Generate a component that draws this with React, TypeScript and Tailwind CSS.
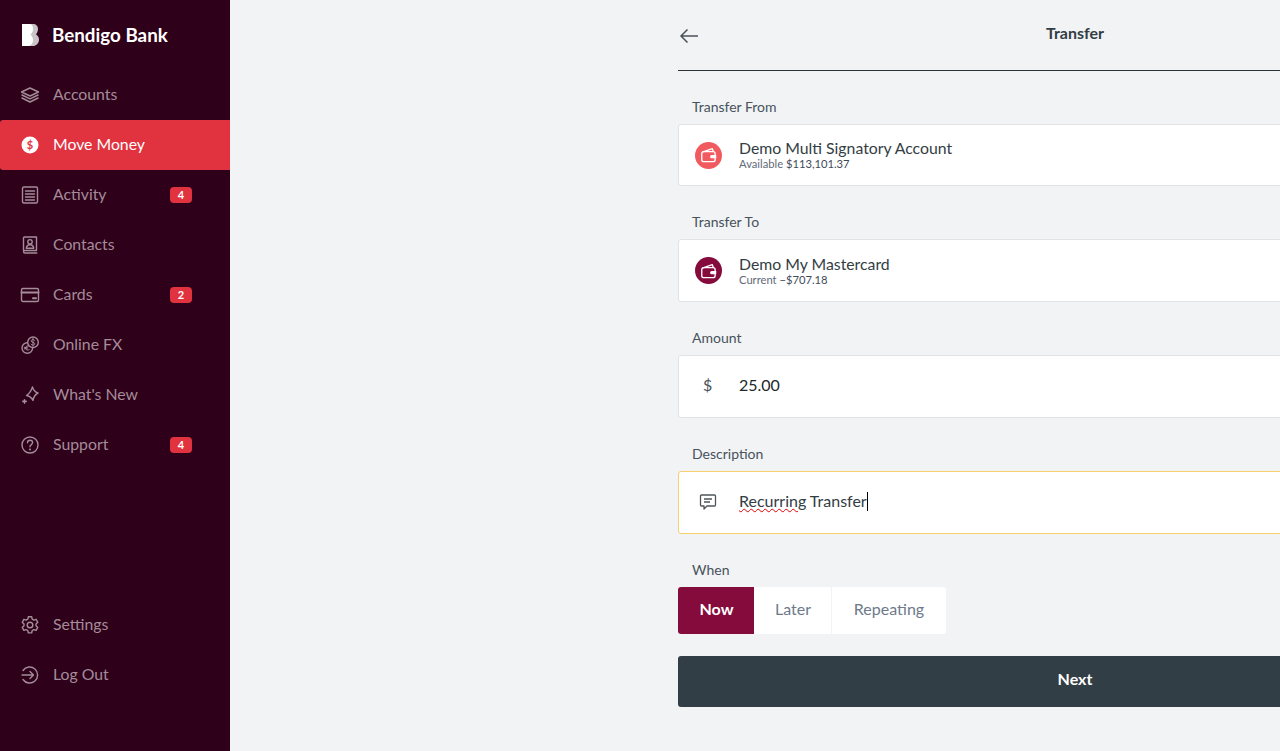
import type { ReactNode } from "react";

const stroke = {
  fill: "none",
  stroke: "currentColor",
  strokeWidth: 1.4,
  strokeLinecap: "round" as const,
  strokeLinejoin: "round" as const,
};

function Icon({ children }: { children: ReactNode }) {
  return (
    <svg width="20" height="20" viewBox="0 0 20 20" {...stroke}>
      {children}
    </svg>
  );
}

const icons: Record<string, ReactNode> = {
  accounts: (
    <Icon>
      <path d="M10 3 18.500 7 10 11 1.500 7Z" />
      <path d="M2 10 10 13.800 18 10" />
      <path d="M2 13 10 17 18 13" />
    </Icon>
  ),
  activity: (
    <Icon>
      <rect x="2.500" y="2" width="15" height="16" rx="1.500" />
      <path d="M5.500 6h9M5.500 9h9M5.500 12h9M5.500 15h9" />
    </Icon>
  ),
  contacts: (
    <Icon>
      <path d="M3.500 15.500V3a1 1 0 0 1 1-1h12v13.500H4.800a1.300 1.300 0 0 0-1.300 1.300v0a1.300 1.300 0 0 0 1.300 1.200h12" />
      <circle cx="10" cy="6.800" r="2.200" />
      <path d="M6.300 13.200c.3-2.200 1.800-3.400 3.700-3.400s3.400 1.200 3.700 3.400Z" />
    </Icon>
  ),
  cards: (
    <Icon>
      <rect x="1.500" y="3.500" width="17" height="13" rx="1.500" />
      <path d="M1.500 7.500h17" strokeWidth="2" />
      <path d="M13 13.300h3" strokeWidth="2" />
    </Icon>
  ),
  fx: (
    <Icon>
      <circle cx="7.300" cy="13" r="5.300" />
      <path d="M9.200 11.200c-1.600-1-3.600 0-3.600 1.800s2 2.800 3.600 1.800M4.300 12.400h3M4.300 13.800h3" strokeWidth="1" />
      <circle cx="13" cy="7.300" r="5.300" fill="#2e0019" />
      <path d="M14.700 5.500c-.4-.7-1-1-1.800-1-1 0-1.700.5-1.700 1.400 0 1.900 3.600 1 3.600 2.900 0 .9-.8 1.400-1.800 1.400-.8 0-1.500-.4-1.900-1M13 3.300v8" strokeWidth="1" />
    </Icon>
  ),
  news: (
    <Icon>
      <path d="M12.500 2C13.400 5.500 14.500 6.800 18 8 15 9.500 13.700 11 13 15.500 11.500 12.500 10 11 6.500 10.500 9.500 8.500 11 6.500 12.500 2Z" />
      <path d="M4.500 14.700v3.400M2.800 16.400h3.400" strokeWidth="1.600" />
    </Icon>
  ),
  support: (
    <Icon>
      <circle cx="10" cy="10" r="8" />
      <path d="M7.500 7.700c0-1.500 1.200-2.400 2.600-2.400s2.500.9 2.500 2.300c0 2.100-2.600 2-2.600 4.200" />
      <circle cx="10" cy="14.500" r=".4" />
    </Icon>
  ),
  settings: (
    <Icon>
      <path d="M8.300 1.800h3.400l.5 2.400 1.600.9 2.300-.8 1.700 3-1.800 1.600v1.900l1.800 1.600-1.700 3-2.300-.8-1.600.9-.5 2.400H8.300l-.5-2.400-1.600-.9-2.300.8-1.700-3 1.800-1.600V9L2.200 7.300l1.700-3 2.300.8 1.600-.9Z" />
      <circle cx="10" cy="10" r="2.800" />
    </Icon>
  ),
  logout: (
    <Icon>
      <path d="M3 5.500A8 8 0 1 1 3 14.500" />
      <path d="M2 10h11.500M10 6.500l3.500 3.500-3.500 3.500" />
    </Icon>
  ),
};

const topNav = [
  { label: "Accounts", icon: "accounts" },
  { label: "Move Money", icon: "move", active: true },
  { label: "Activity", icon: "activity", badge: 4 },
  { label: "Contacts", icon: "contacts" },
  { label: "Cards", icon: "cards", badge: 2 },
  { label: "Online FX", icon: "fx" },
  { label: "What's New", icon: "news" },
  { label: "Support", icon: "support", badge: 4 },
];

const bottomNav = [
  { label: "Settings", icon: "settings" },
  { label: "Log Out", icon: "logout" },
];

function NavItem({ label, icon, active, badge }: { label: string; icon: string; active?: boolean; badge?: number }) {
  return (
    <div
      className={`flex items-center h-[50px] pl-[20px] text-[15.8px] rounded-l-[3px] ${
        active ? "bg-[#e0323f] text-white" : "text-[#a48c9a]"
      }`}
    >
      <span className="w-[20px] h-[20px] mr-[13px] shrink-0">
        {active ? (
          <svg width="20" height="20" viewBox="0 0 20 20">
            <circle cx="10" cy="10" r="8.500" fill="#fff" />
            <text x="10" y="14" textAnchor="middle" fontSize="11" fontWeight="700" fill="#e0323f">
              $
            </text>
          </svg>
        ) : (
          icons[icon]
        )}
      </span>
      <span className="flex-1 pb-[3px]">{label}</span>
      {badge && (
        <span className="flex items-center justify-center w-[22px] h-[16px] mr-[38px] rounded-[4px] bg-[#e0323f] text-white text-[11px] font-bold">
          {badge}
        </span>
      )}
    </div>
  );
}

function Wallet() {
  return (
    <svg width="20" height="20" viewBox="0 0 18 18" fill="none" stroke="#fff" strokeWidth="1.200" strokeLinejoin="round">
      <path d="M3 6.500 12 3.300l1 3" />
      <rect x="2.500" y="6" width="12" height="9" rx="1.800" />
      <path d="M15.500 9h-4a1.500 1.500 0 0 0 0 3h4Z" fill="#fff" stroke="none" />
    </svg>
  );
}

function AccountCard({ name, sub, value, color }: { name: string; sub: string; value: string; color: string }) {
  return (
    <div className="flex items-center h-full pl-[16px] bg-white border border-[#e1e3e5] rounded-[3px]">
      <span className={`flex items-center justify-center w-[27px] h-[27px] rounded-full ${color}`}>
        <Wallet />
      </span>
      <div className="ml-[17px] pb-[2px]">
        <div className="text-[15.8px] leading-[19px] text-[#333d44]">{name}</div>
        <div className="text-[11.2px] leading-[13px] text-[#5f6a78]">
          {sub} <span className="text-[#3f4a58]">{value}</span>
        </div>
      </div>
    </div>
  );
}

function Label({ children }: { children: ReactNode }) {
  return <div className="h-[20px] mb-[7px] pl-[14px] text-[14px] leading-[20px] text-[#47525c]">{children}</div>;
}

export default function App() {
  return (
    <div className="flex h-[751px] overflow-hidden bg-[#f2f3f5] font-['Lato',sans-serif]">
      {/* Sidebar */}
      <aside className="flex flex-col w-[230px] shrink-0 bg-[#2e0019]">
        <div className="flex items-center h-[70px] pl-[22px] text-white">
          <svg width="17" height="22" viewBox="0 0 17 22" className="mr-[13px]">
            <path d="M6 0h5c3 0 5 2 5 5 0 2-1 4-2 5.500 2 1 3 3 3 5 0 4-3 6.500-6 6.500H6Z" fill="#c9c4c7" />
            <path d="M0 0h7c3 0 4 2 4 5s-1 4-2.500 5.500C10 12 11 13.500 11 16c0 3.500-2 6-5 6H0Z" fill="#fff" />
          </svg>
          <span className="text-[18.800px] font-bold">Bendigo Bank</span>
        </div>
        {topNav.map((item) => (
          <NavItem key={item.label} {...item} />
        ))}
        <div className="mt-auto pb-[51px]">
          {bottomNav.map((item) => (
            <NavItem key={item.label} {...item} />
          ))}
        </div>
      </aside>

      {/* Transfer form */}
      <main className="flex-1 overflow-hidden">
        <div className="w-[794px] ml-[448px]">
          <header className="flex items-center h-[71px] pb-[4px] border-b border-[#2b3238] relative">
            <svg width="20" height="16" viewBox="0 0 20 16" fill="none" stroke="#4a5258" strokeWidth="1.500" className="absolute left-[1px] top-[28px]">
              <path d="M19 8H2M8.500 1.500 2 8l6.500 6.500" />
            </svg>
            <h1 className="flex-1 text-center text-[16px] font-bold text-[#333d44]">Transfer</h1>
          </header>

          <div className="pt-[26px]">
            <Label>Transfer From</Label>
            <div className="h-[62px] mb-[26px]">
              <AccountCard name="Demo Multi Signatory Account" sub="Available" value="$113,101.37" color="bg-[#f15b5f]" />
            </div>

            <Label>Transfer To</Label>
            <div className="h-[63px] mb-[26px]">
              <AccountCard name="Demo My Mastercard" sub="Current" value="−$707.18" color="bg-[#850b3d]" />
            </div>

            <Label>Amount</Label>
            <div className="flex items-center h-[63px] mb-[26px] pb-[3px] bg-white border border-[#e1e3e5] rounded-[3px] text-[16px] text-[#22272b]">
              <span className="w-[60px] pl-[24px] text-[#4a5258]">$</span>
              <span>25.00</span>
            </div>

            <Label>Description</Label>
            <div className="flex items-center h-[63px] mb-[26px] pb-[3px] bg-white border border-[#f8cf6e] rounded-[3px] text-[16px] text-[#333d44]">
              <span className="w-[60px] pl-[20px] pt-[2px]">
                <svg width="18" height="18" viewBox="0 0 18 18" fill="none" stroke="#4f5559" strokeWidth="1.300" strokeLinejoin="round">
                  <path d="M2.500 2h13a1 1 0 0 1 1 1v9a1 1 0 0 1-1 1H8l-3 3v-3H2.500a1 1 0 0 1-1-1V3a1 1 0 0 1 1-1Z" />
                  <path d="M5 6h8M5 9h6" />
                </svg>
              </span>
              <span className="underline decoration-wavy decoration-[#e00000] decoration-1 underline-offset-1">Recurring</span>
              <span className="whitespace-pre"> Transfer</span>
              <span className="w-px h-[19px] bg-black" />
            </div>

            <Label>When</Label>
            <div className="flex h-[47px] w-fit rounded-[3px] overflow-hidden bg-white text-[16px] text-[#6d7a8a]">
              <div className="flex items-center justify-center w-[76px] pb-[3px] pl-[1px] bg-[#850b3d] text-white font-bold">Now</div>
              <div className="flex items-center justify-center w-[78px] pb-[3px] pl-[1px] border-r border-[#f2f3f5]">Later</div>
              <div className="flex items-center justify-center w-[114px] pb-[3px]">Repeating</div>
            </div>

            <button className="block w-full h-[51px] mt-[22px] pb-[6px] rounded-[3px] bg-[#323e45] text-white text-[16px] font-bold">Next</button>
          </div>
        </div>
      </main>
    </div>
  );
}
